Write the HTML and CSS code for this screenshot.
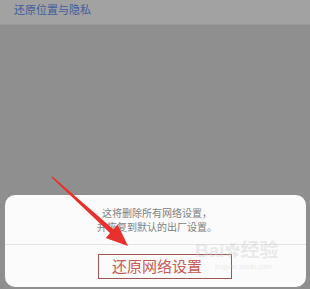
FILE: index.html
```html
<!DOCTYPE html>
<html lang="zh">
<head>
<meta charset="utf-8">
<link rel="stylesheet" href="styles.css">
</head>
<body>
<div class="page">
  <div class="topband"><span class="link">还原位置与隐私</span></div>
  <div class="spacer"></div>
  <div class="sheet">
    <div class="msg">
      <div>这将删除所有网络设置，</div>
      <div>并恢复到默认的出厂设置。</div>
    </div>
    <div class="action">
      <span class="action-text">还原网络设置</span>
      <span class="mark-box"></span>
    </div>
    <div class="watermark"><span class="wm-big">Bai<span class="paw">✿</span>经验</span><span class="wm-small">jingyan.baidu.com</span></div>
  </div>
  <svg class="arrow" width="310" height="289" viewBox="0 0 310 289">
    <polygon points="51.5,177.5 52.5,176.5 113.4,229.3 117.7,224.5 128,246 105.7,237.9 110,233" fill="#e8302c"/>
  </svg>
</div>
</body>
</html>
```
FILE: styles.css
```css
html, body {
  margin: 0;
  padding: 0;
}
body {
  width: 310px;
  height: 289px;
  overflow: hidden;
  font-family: "Noto Sans CJK SC", "Noto Sans", sans-serif;
}
.page {
  position: relative;
  width: 310px;
  height: 289px;
  display: flex;
  flex-direction: column;
  background: #8f8f8f;
}
.topband {
  height: 24px;
  background: #a2a2a2;
  padding-left: 14px;
  display: flex;
  align-items: center;
  border-bottom: 1px solid #999;
}
.link {
  font-size: 11px;
  line-height: 14px;
  color: #3c5e9c;
  margin-top: -6px;
}
.spacer {
  flex: 1;
}
.sheet {
  position: relative;
  margin: 0 4px 2px 5px;
  height: 92px;
  background: #fbfbfb;
  border-radius: 10px;
  display: flex;
  flex-direction: column;
}
.msg {
  padding: 11px 0 10px;
  text-align: center;
  font-size: 10px;
  line-height: 14px;
  color: #7f7f7f;
  border-bottom: 1px solid #e4e4e4;
  padding-left: 3px;
}
.action {
  position: relative;
  flex: 1;
  display: flex;
  align-items: center;
  justify-content: center;
  padding-left: 3px;
}
.action-text {
  font-size: 15px;
  line-height: 18px;
  color: #c95a55;
  margin-top: -1px;
}
.mark-box {
  position: absolute;
  left: 93px;
  top: 9px;
  width: 132px;
  height: 23px;
  border: 1px solid #9c5550;
}
.watermark {
  position: absolute;
  left: 190px;
  top: 46px;
  display: flex;
  flex-direction: column;
  color: rgba(205, 205, 205, 0.4);
  pointer-events: none;
}
.wm-big {
  font-family: "Liberation Sans", "Noto Sans CJK SC", sans-serif;
  font-size: 19px;
  font-weight: bold;
  line-height: 20px;
}
.paw {
  font-size: 16px;
}
.wm-small {
  font-family: "Liberation Sans", sans-serif;
  font-size: 7px;
  line-height: 9px;
  padding-left: 20px;
}
.arrow {
  position: absolute;
  left: 0;
  top: 0;
}
```
